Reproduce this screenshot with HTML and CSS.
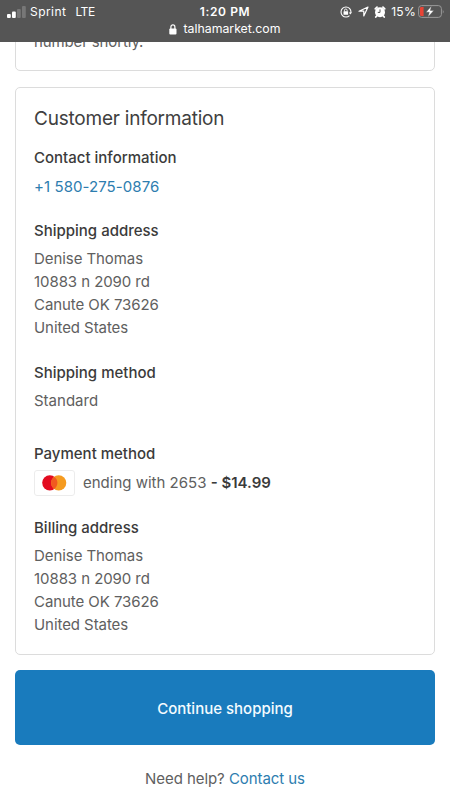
FILE: index.html
```html
<!DOCTYPE html>
<html lang="en">
<head>
<meta charset="utf-8">
<meta name="viewport" content="width=device-width, initial-scale=1">
<title>Customer information</title>
<link rel="stylesheet" href="styles.css">
</head>
<body>
<header class="chrome">
  <div class="status">
    <div class="carrier">
      <svg width="19" height="12" viewBox="0 0 19 12"><rect x="0" y="8" width="3.8" height="4" rx="1" fill="#fff"/><rect x="5" y="5.5" width="3.8" height="6.5" rx="1" fill="#fff"/><rect x="10" y="3" width="3.8" height="9" rx="1" fill="#777"/><rect x="15" y="0" width="3.8" height="12" rx="1" fill="#777"/></svg>
      <span class="sprint">Sprint</span><span class="lte">LTE</span>
    </div>
    <div class="time">1:20 PM</div>
    <div class="indicators">
      <svg class="rotation" width="12" height="12" viewBox="0 0 12 12" fill="none" stroke="#fff"><path d="M9.5 2.4A5 5 0 1 0 9.5 9.6M9.5 2.4A5 5 0 0 1 10.8 7" stroke-width="1.1"/><path d="M8.8 6.5h3.1l-1.6 2z" fill="#fff" stroke="none"/><rect x="3.5" y="5.3" width="4.6" height="3.4" rx=".5" fill="#fff" stroke="none"/><path d="M4.5 5.5V4.3a1.3 1.3 0 0 1 2.6 0v1.2" stroke-width=".9"/></svg>
      <svg class="location" width="11" height="11" viewBox="0 0 11 11" fill="none"><path d="M1 5.2 10 1 5.8 10V5.2z" stroke="#fff" stroke-width="1.2" stroke-linejoin="round"/></svg>
      <svg class="alarm" width="12" height="12" viewBox="0 0 12 12"><path d="M1.3 2.8 3 1.2M10.7 2.8 9 1.2M2.6 10 1.8 11M9.4 10l.8 1" stroke="#fff" stroke-width="1.8" stroke-linecap="round"/><circle cx="6" cy="6.2" r="5" fill="#fff"/><path d="M6 3.4v3H3.8" stroke="#555" fill="none"/></svg>
      <span class="percent">15%</span>
      <svg class="battery" width="27" height="13" viewBox="0 0 27 13"><rect x=".6" y=".6" width="22.8" height="11.8" rx="3" fill="none" stroke="#999"/><path d="M3.2 2H5.6V11H3.2Q2 11 2 9.8V3.2Q2 2 3.2 2Z" fill="#e94435"/><path d="M24.8 4.5q1.5 2 0 4z" fill="#999"/><path d="M13.5 1 8 7.2h3.3L10 12l5.8-6.5h-3.5z" fill="#fff" stroke="#555" stroke-width=".4"/></svg>
    </div>
  </div>
  <div class="address">
    <svg width="8" height="11" viewBox="0 0 8 11"><rect x=".3" y="4.5" width="7.2" height="6" rx="1" fill="#fff"/><path d="M1.9 5V2.9a2 2 0 0 1 4 0V5" fill="none" stroke="#fff" stroke-width="1.2"/></svg>
    <span class="domain">talhamarket.com</span>
  </div>
</header>
<main class="page">
  <section class="card previous"><p class="notice">number shortly.</p></section>
  <section class="card customer">
    <h1><span class="title">Customer information</span></h1>
    <div class="entry">
      <h2>Contact information</h2>
      <p><a class="phone">+1 580-275-0876</a></p>
    </div>
    <div class="entry">
      <h2>Shipping address</h2>
      <p class="lines">Denise Thomas<br>10883 n 2090 rd<br>Canute OK 73626<br>United States</p>
    </div>
    <div class="entry method">
      <h2>Shipping method</h2>
      <p>Standard</p>
    </div>
    <div class="entry payment">
      <h2>Payment method</h2>
      <p class="pay-row">
        <svg class="mastercard" width="41" height="26" viewBox="0 0 41 26"><rect x=".5" y=".5" width="40" height="25" rx="2.5" fill="#fff" stroke="#ececec"/><circle cx="15.8" cy="12.8" r="7.6" fill="#e30b20"/><circle cx="24.7" cy="12.8" r="7.6" fill="#f59b20"/><path d="M20.25 6.64a7.6 7.6 0 0 1 0 12.32a7.6 7.6 0 0 1 0-12.32z" fill="#f15a20"/></svg>
        <span class="ending">ending with 2653 <strong>- $14.99</strong></span>
      </p>
    </div>
    <div class="entry">
      <h2>Billing address</h2>
      <p class="lines">Denise Thomas<br>10883 n 2090 rd<br>Canute OK 73626<br>United States</p>
    </div>
  </section>
  <a class="button"><span class="label">Continue shopping</span></a>
  <p class="help">Need help? <a>Contact us</a></p>
</main>
</body>
</html>
```
FILE: styles.css
```css
* { box-sizing: border-box; }
body {
  margin: 0;
  height: 800px;
  overflow: hidden;
  background: #fff;
  color: #606060;
  font: 400 15px/22.85px Inter, "Liberation Sans", sans-serif;
}
h1, h2, p { margin: 0; }
svg { display: block; flex: none; }
a { color: #2d7daf; }

.chrome {
  position: relative;
  z-index: 1;
  height: 42px;
  background: #555;
  color: #fff;
}
.status {
  display: grid;
  grid-template-columns: 1fr auto 1fr;
  height: 23px;
  padding: 0 6px 0 7px;
  align-items: center;
  font-size: 12px;
  line-height: 23px;
}
.carrier, .indicators { display: flex; align-items: center; }
.indicators { justify-content: flex-end; margin-right: -1px; }
.sprint { margin-left: 4px; letter-spacing: .45px; }
.lte { margin-left: 9px; letter-spacing: -.4px; }
.time { font-weight: 600; letter-spacing: .6px; margin-left: -1px; }
.location { margin-left: 6px; }
.alarm { margin-left: 5px; }
.percent { margin-left: 5px; letter-spacing: .3px; }
.battery { margin-left: 2px; }
.rotation { margin-right: 0; }
.address {
  display: flex;
  justify-content: center;
  align-items: center;
  gap: 6px;
  height: 13px;
  font-size: 12.3px;
}

.page { padding: 0 15px; }
.card {
  border: 1px solid #dcdcdc;
  border-radius: 5px;
  padding: 0 18px;
}
.previous { height: 41px; margin-top: -12px; }
.notice { letter-spacing: -.12px; }
.customer { height: 568px; margin-top: 16px; padding-top: 17px; }
h1 {
  margin-bottom: 13px;
  color: #404040;
  font-size: 19px;
  font-weight: 400;
  letter-spacing: -.22px;
  line-height: 28px;
}
h2 {
  margin-bottom: 6.5px;
  color: #3b3b3b;
  font-size: 15px;
  font-weight: 500;
  line-height: 23px;
}
.entry { margin-bottom: 20.6px; }
.lines { letter-spacing: -.07px; line-height: 22.9px; }
.phone { letter-spacing: .07px; }
.method { margin-bottom: 29.1px; }
.payment { margin-bottom: 21.2px; }
.pay-row { display: flex; align-items: center; gap: 8px; height: 23px; }
strong { color: #3b3b3b; font-weight: 600; }

.button {
  display: flex;
  justify-content: center;
  align-items: center;
  height: 75px;
  padding-top: 3px;
  margin-top: 15px;
  border-radius: 5px;
  background: #197bbd;
  color: #f4fbff;
  font-weight: 500;
}
.help { margin-top: 23px; text-align: center; letter-spacing: -.06px; }
```
